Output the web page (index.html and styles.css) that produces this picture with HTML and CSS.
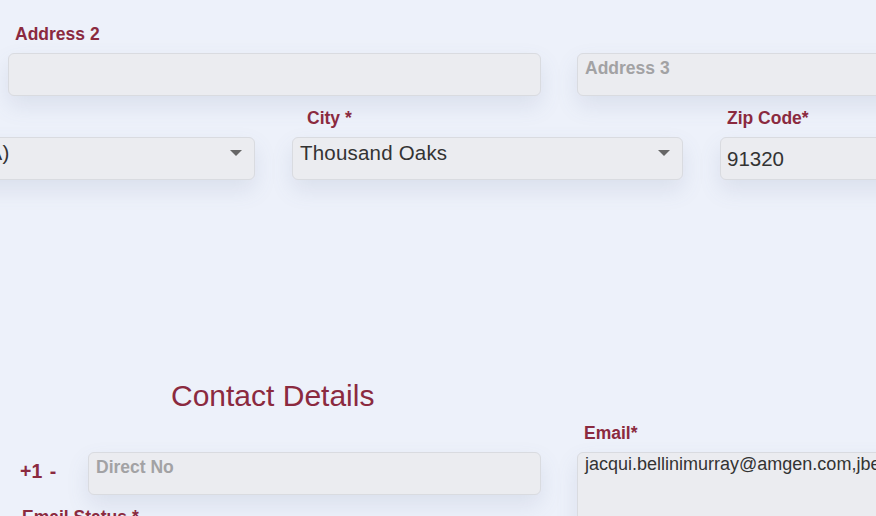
FILE: index.html
```html
<!DOCTYPE html>
<html lang="en">
<head>
    <meta charset="UTF-8">
    <meta name="viewport" content="width=device-width, initial-scale=1.0">
    <title>Contact Details</title>
    <link rel="stylesheet" href="styles.css">
</head>
<body>

    <form class="profile-form">
        <div class="row row-address">
            <div class="field field-wide">
                <label for="address2">Address 2</label>
                <textarea id="address2" class="box"></textarea>
            </div>
            <div class="field field-wide">
                <label for="address3">&nbsp;</label>
                <textarea id="address3" class="box" placeholder="Address 3"></textarea>
            </div>
        </div>

        <div class="row row-location">
            <div class="field field-third">
                <label>&nbsp;</label>
                <div class="box select-box">
                    <span class="select-value">California (CA)</span>
                    <span class="arrow"></span>
                </div>
            </div>
            <div class="field field-third">
                <label class="label-indent">City *</label>
                <div class="box select-box">
                    <span class="select-value">Thousand Oaks</span>
                    <span class="arrow"></span>
                </div>
            </div>
            <div class="field field-third">
                <label for="zip">Zip Code*</label>
                <input id="zip" class="box zip-input" type="text" value="91320">
            </div>
        </div>

        <h2 class="section-title">Contact Details</h2>

        <div class="row row-contact">
            <div class="contact-left">
                <div class="phone-line">
                    <span class="phone-prefix">+1 -</span>
                    <textarea class="box phone-input" placeholder="Direct No"></textarea>
                </div>
                <label class="status-label">Email Status *</label>
            </div>
            <div class="field field-wide">
                <label for="email">Email*</label>
                <textarea id="email" class="box email-box">jacqui.bellinimurray@amgen.com,jbellini@amgen.com</textarea>
            </div>
        </div>
    </form>

</body>
</html>
```

FILE: styles.css
```css
body {
    margin: 0;
    background-color: #edf1fa;
    font-family: "Liberation Sans", Arial, sans-serif;
    overflow: hidden;
}

.profile-form {
    width: 1400px;
}

.row {
    display: flex;
}

.field {
    display: flex;
    flex-direction: column;
}

.field label {
    height: 20px;
    line-height: 20px;
    margin-bottom: 9px;
    padding-left: 7px;
    font-size: 17.5px;
    font-weight: bold;
    color: #8b2a3f;
}

.field label.label-indent {
    padding-left: 15px;
}

.box {
    box-sizing: border-box;
    height: 43px;
    margin: 0;
    background-color: #ebecf0;
    border: 1px solid #d9dbe0;
    border-radius: 6px;
    box-shadow: 0 10px 22px rgba(90, 110, 150, 0.13);
    font-family: "Liberation Sans", Arial, sans-serif;
    color: #333;
    outline: none;
    resize: none;
}

textarea.box {
    padding: 4px 7px;
    font-size: 17.5px;
    line-height: 20px;
}

textarea.box::placeholder {
    color: #a2a2a4;
    font-weight: bold;
}

/* address row */
.row-address {
    padding: 24px 0 0 8px;
    gap: 36px;
}

.field-wide {
    width: 533px;
}

/* state / city / zip row */
.row-location {
    margin-left: -136px;
    padding-top: 12px;
    gap: 37px;
}

.field-third {
    width: 391px;
}

.select-box {
    display: flex;
    justify-content: space-between;
    padding: 3px 12px 0 7px;
    font-size: 20.5px;
    line-height: 24px;
    letter-spacing: 0.2px;
}

.arrow {
    width: 0;
    height: 0;
    margin-top: 9px;
    border-left: 6px solid transparent;
    border-right: 6px solid transparent;
    border-top: 6px solid #666;
}

.zip-input {
    width: 100%;
    padding: 0 6px;
    font-size: 20.5px;
}

/* contact section */
.section-title {
    margin: 198px 0 9px 171px;
    height: 36px;
    line-height: 36px;
    font-size: 30px;
    font-weight: normal;
    color: #8b2a3f;
}

.row-contact {
    gap: 36px;
    padding-left: 15px;
}

.contact-left {
    width: 526px;
    padding-top: 29px;
}

.phone-line {
    display: flex;
    align-items: center;
}

.phone-prefix {
    width: 73px;
    padding: 0 0 5px 5px;
    box-sizing: border-box;
    font-size: 19.5px;
    font-weight: bold;
    word-spacing: 2px;
    color: #8b2a3f;
}

.phone-input {
    width: 453px;
}

.status-label {
    display: block;
    margin-top: 12px;
    padding-left: 7px;
    line-height: 20px;
    font-size: 17.5px;
    font-weight: bold;
    color: #8b2a3f;
}

.email-box {
    height: 90px;
}

textarea.email-box {
    padding: 1px 7px;
    font-size: 18px;
    line-height: 20px;
}
```
